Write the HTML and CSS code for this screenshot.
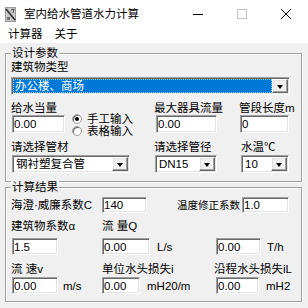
FILE: index.html
```html
<!DOCTYPE html>
<html lang="zh-CN">
<head>
  <meta charset="UTF-8">
  <title>室内给水管道水力计算</title>
  <link rel="stylesheet" href="styles.css">
</head>
<body>
  <div class="titlebar">
    <svg class="app-icon" viewBox="0 0 11 15">
      <rect x="0" y="0" width="11" height="15" fill="#9a9a9a"/>
      <rect x="1" y="1" width="9" height="13" fill="#c8c8c8"/>
      <path d="M1 2 L10 13" stroke="#303030" stroke-width="1.6"/>
      <path d="M6 3 L9 2 L8 6" stroke="#505050" stroke-width="1" fill="none"/>
      <rect x="2" y="10" width="3" height="3" fill="#707070"/>
    </svg>
    <span class="title">室内给水管道水力计算</span>
    <div class="win-btns">
      <span class="win-btn">
        <svg width="10" height="10" viewBox="0 0 10 10"><path d="M0 5.5 H10" stroke="#000" stroke-width="1"/></svg>
      </span>
      <span class="win-btn">
        <svg width="10" height="10" viewBox="0 0 10 10"><rect x="0.5" y="0.5" width="9" height="9" fill="none" stroke="#c4c4c4" stroke-width="1"/></svg>
      </span>
      <span class="win-btn">
        <svg width="10" height="10" viewBox="0 0 10 10"><path d="M0 0 L10 10 M10 0 L0 10" stroke="#000" stroke-width="1"/></svg>
      </span>
    </div>
  </div>

  <div class="menubar">
    <span class="menu-item">计算器</span>
    <span class="menu-item">关于</span>
  </div>

  <div class="client">
    <fieldset class="group group-design">
      <legend>设计参数</legend>
      <div class="label">建筑物类型</div>
      <div class="combo combo-type">
        <span class="combo-text selected">办公楼、商场</span>
        <span class="combo-btn"></span>
      </div>

      <div class="cols">
        <div class="col col-a">
          <div class="label">给水当量</div>
          <div class="ctl-line">
            <input class="edit edit-load" value="0.00" readonly>
            <div class="radios">
              <label class="radio"><span class="radio-dot on"></span>手工输入</label>
              <label class="radio"><span class="radio-dot"></span>表格输入</label>
            </div>
          </div>
          <div class="label label-low">请选择管材</div>
          <div class="combo combo-pipe">
            <span class="combo-text">钢衬塑复合管</span>
            <span class="combo-btn"></span>
          </div>
        </div>

        <div class="col col-b">
          <div class="label">最大器具流量</div>
          <div class="ctl-line">
            <input class="edit edit-max" value="0.00" readonly>
          </div>
          <div class="label label-low">请选择管径</div>
          <div class="combo combo-dn">
            <span class="combo-text">DN15</span>
            <span class="combo-btn"></span>
          </div>
        </div>

        <div class="col col-c">
          <div class="label">管段长度m</div>
          <div class="ctl-line">
            <input class="edit edit-len" value="0" readonly>
          </div>
          <div class="label label-low label-temp">水温℃</div>
          <div class="combo combo-temp">
            <span class="combo-text">10</span>
            <span class="combo-btn"></span>
          </div>
        </div>
      </div>
    </fieldset>

    <fieldset class="group group-result">
      <legend>计算结果</legend>
      <div class="row row-first">
        <span class="cell-1 label">海澄·威廉系数C</span>
        <input class="edit edit-short edit-hw" value="140" readonly>
        <span class="label label-tc">温度修正系数</span>
        <input class="edit edit-short edit-tc" value="1.0" readonly>
      </div>

      <div class="row row-labels">
        <span class="cell-1 label">建筑物系数α</span>
        <span class="cell-2 label">流 量Q</span>
      </div>

      <div class="row row-edits">
        <span class="cell-1"><input class="edit edit-a" value="1.5" readonly></span>
        <span class="cell-2"><input class="edit edit-q" value="0.00" readonly><span class="unit unit-ls">L/s</span></span>
        <span class="cell-3"><input class="edit edit-th" value="0.00" readonly><span class="unit unit-th">T/h</span></span>
      </div>

      <div class="row row-labels row-labels-low">
        <span class="cell-1 label">流 速v</span>
        <span class="cell-2 label">单位水头损失i</span>
        <span class="cell-3 label">沿程水头损失iL</span>
      </div>

      <div class="row row-edits row-edits-low">
        <span class="cell-1"><input class="edit edit-a" value="0.00" readonly><span class="unit unit-ms">m/s</span></span>
        <span class="cell-2"><input class="edit edit-i" value="0.00" readonly><span class="unit unit-i">mH20/m</span></span>
        <span class="cell-3"><input class="edit edit-il" value="0.00" readonly><span class="unit unit-il">mH2</span></span>
      </div>
    </fieldset>
  </div>
</body>
</html>
```

FILE: styles.css
```css
* {
  box-sizing: border-box;
}

html, body {
  margin: 0;
}

body {
  width: 308px;
  height: 308px;
  overflow: hidden;
  background-color: #f0f0f0;
  font-family: "Liberation Sans", "Noto Sans CJK SC", sans-serif;
  font-size: 11.5px;
  color: #000000;
}

/* window chrome */
.titlebar {
  height: 28px;
  background-color: #ffffff;
  display: flex;
  align-items: center;
}

.app-icon {
  width: 11px;
  height: 15px;
  margin-left: 5px;
}

.title {
  margin-left: 8px;
  line-height: 14px;
}

.win-btns {
  margin-left: auto;
  display: flex;
}

.win-btn {
  width: 44px;
  height: 28px;
  display: flex;
  align-items: center;
  justify-content: center;
}

.menubar {
  height: 15px;
  background-color: #ffffff;
  display: flex;
  padding-left: 8px;
  line-height: 12px;
}

.menu-item {
  margin-right: 12px;
}

.client {
  padding: 3px 6px 0 5px;
}

/* group boxes */
.group {
  margin: 0;
  padding: 0 5px 8px 5px;
  border: 1px solid #a0a0a0;
  box-shadow: 1px 1px 0 #ffffff, inset 1px 1px 0 #ffffff;
  min-width: 0;
}

.group legend {
  padding: 0 1px;
  line-height: 14px;
  background-color: #f0f0f0;
}

.group-result {
  margin-top: -2px;
  padding-bottom: 7px;
}

.label {
  line-height: 14px;
  white-space: nowrap;
}

/* sunken edit field */
.edit {
  height: 18px;
  margin: 0;
  padding: 0 1px;
  font: inherit;
  color: #000000;
  background-color: #ffffff;
  border: 1px solid;
  border-color: #a0a0a0 #ffffff #ffffff #a0a0a0;
  box-shadow: inset 1px 1px 0 #696969, inset -1px -1px 0 #e3e3e3;
  outline: none;
}

/* combo box */
.combo {
  height: 18px;
  display: flex;
  padding: 1px;
  background-color: #ffffff;
  border: 1px solid;
  border-color: #a0a0a0 #ffffff #ffffff #a0a0a0;
  box-shadow: inset 1px 1px 0 #696969, inset -1px -1px 0 #e3e3e3;
}

.combo-text {
  flex: 1;
  padding-left: 2px;
  line-height: 14px;
  white-space: nowrap;
}

.combo-text.selected {
  background-color: #0078d7;
  color: #ffffff;
  outline: 1px dotted #9cc8f0;
  outline-offset: -1px;
}

.combo-btn {
  width: 16px;
  display: flex;
  align-items: center;
  justify-content: center;
  background-color: #f0f0f0;
  border: 1px solid;
  border-color: #ffffff #696969 #696969 #ffffff;
  box-shadow: inset -1px -1px 0 #a0a0a0, inset 1px 1px 0 #e3e3e3;
}

.combo-btn::after {
  content: "";
  border-top: 4px solid #000000;
  border-left: 3.5px solid transparent;
  border-right: 3.5px solid transparent;
  margin-top: 1px;
}

.combo-type {
  margin-top: 3px;
  width: 279px;
}

/* design parameter columns */
.cols {
  display: flex;
  margin-top: 6px;
}

.col-a {
  width: 143px;
}

.col-b {
  width: 85px;
}

.col-c {
  flex: 1;
}

.ctl-line {
  height: 18px;
  display: flex;
  align-items: flex-start;
}

.label-low {
  margin-top: 7px;
}

.label-temp {
  padding-left: 2px;
}

.edit-load {
  width: 53px;
  margin-left: 1px;
}

.edit-max {
  width: 61px;
  margin-left: 2px;
}

.edit-len {
  width: 49px;
  margin-left: 1px;
}

.combo-pipe {
  width: 118px;
  margin-left: 1px;
  margin-top: 1px;
}

.combo-dn {
  width: 62px;
  margin-left: 1px;
  margin-top: 1px;
}

.combo-temp {
  width: 48px;
  margin-left: 2px;
  margin-top: 1px;
}

.radios {
  margin-left: 7px;
  margin-top: -2px;
}

.radio {
  display: flex;
  align-items: center;
  height: 12px;
  line-height: 12px;
  white-space: nowrap;
}

.radio-dot {
  width: 10px;
  height: 10px;
  margin-right: 5px;
  border-radius: 50%;
  background-color: #ffffff;
  border: 1px solid #a0a0a0;
  box-shadow: inset 1px 1px 0 #696969;
  display: flex;
  align-items: center;
  justify-content: center;
}

.radio-dot.on::after {
  content: "";
  width: 4px;
  height: 4px;
  border-radius: 50%;
  background-color: #000000;
}

/* result rows */
.row {
  display: flex;
  align-items: center;
}

.row-first {
  height: 18px;
  margin-top: 2px;
}

.row-labels {
  margin-top: 5px;
}

.row-labels-low {
  margin-top: 7px;
}

.row-edits {
  height: 17px;
  margin-top: 5px;
}

.row-edits-low {
  margin-top: 1px;
}

.cell-1 {
  width: 91px;
  display: flex;
  align-items: center;
}

.cell-2 {
  width: 112px;
  display: flex;
  align-items: center;
}

.cell-3 {
  flex: 1;
  display: flex;
  align-items: center;
}

.row-edits .edit {
  height: 17px;
}

.edit-short {
  height: 16px;
}

.edit-hw {
  width: 45px;
}

.label-tc {
  margin-left: 30px;
  width: 65px;
  font-size: 10.5px;
}

.edit-tc {
  width: 47px;
}

.edit-a {
  width: 46px;
  margin-left: 1px;
}

.edit-q {
  width: 48px;
}

.edit-th {
  width: 45px;
  margin-left: 2px;
}

.edit-i {
  width: 38px;
}

.edit-il {
  width: 43px;
  margin-left: 2px;
}

.unit {
  white-space: nowrap;
  line-height: 14px;
}

.unit-ls {
  margin-left: 7px;
}

.unit-th {
  margin-left: 6px;
}

.unit-ms {
  margin-left: 5px;
}

.unit-i {
  margin-left: 7px;
}

.unit-il {
  margin-left: 7px;
}
```
